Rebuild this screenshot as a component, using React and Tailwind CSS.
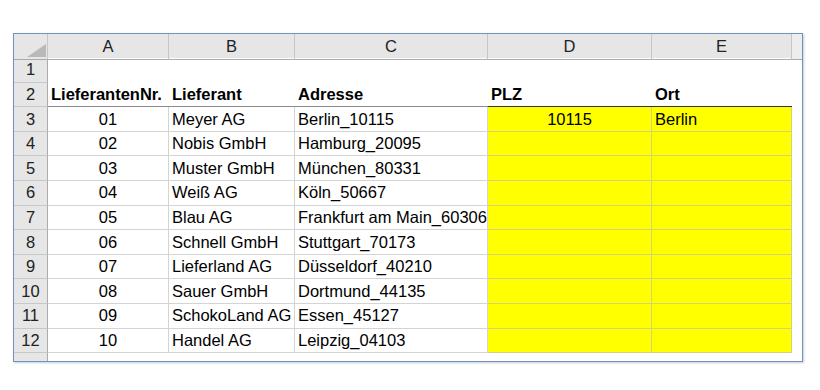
import React from "react";

const rows = [
  ["01", "Meyer AG", "Berlin_10115", "10115", "Berlin"],
  ["02", "Nobis GmbH", "Hamburg_20095", "", ""],
  ["03", "Muster GmbH", "München_80331", "", ""],
  ["04", "Weiß AG", "Köln_50667", "", ""],
  ["05", "Blau AG", "Frankfurt am Main_60306", "", ""],
  ["06", "Schnell GmbH", "Stuttgart_70173", "", ""],
  ["07", "Lieferland AG", "Düsseldorf_40210", "", ""],
  ["08", "Sauer GmbH", "Dortmund_44135", "", ""],
  ["09", "SchokoLand AG", "Essen_45127", "", ""],
  ["10", "Handel AG", "Leipzig_04103", "", ""],
];

const cols = "grid grid-cols-[34px_121px_126px_193px_164px_140px_10px]";

function RowNum({ n, h = "h-[24.6px]" }) {
  return (
    <div className={`${h} flex items-center justify-center font-normal bg-[#e6e6e6] border-r border-b border-r-[#ababab] border-b-[#c8c8c8] text-[#222]`}>
      {n}
    </div>
  );
}

function Cell({ children, className = "" }) {
  return (
    <div className={`h-[24.6px] flex items-center whitespace-nowrap overflow-visible border-r border-b border-[#d4d4d4] ${className}`}>
      {children}
    </div>
  );
}

function Plain({ children, className = "" }) {
  return (
    <div className={`h-[24.6px] flex items-center whitespace-nowrap ${className}`}>
      {children}
    </div>
  );
}

export default function App() {
  return (
    <div className="w-[820px] h-[390px] bg-white pt-[33px] pl-[13px] font-['Liberation_Sans',Arial,sans-serif] text-[16.5px] text-black">
      <div className="w-[790px] h-[329px] border border-[#6f93bb] shadow-[1px_1px_2px_rgba(80,110,150,0.35)] overflow-hidden bg-white">
        {/* column header */}
        <div className={`${cols} h-[24px] bg-[#e6e6e6] text-[#222]`}>
          <div className="relative border-r border-b border-r-[#c6c6c6] border-b-[#ababab]">
            <svg className="absolute left-[13px] top-[10px]" width="19" height="13" viewBox="0 0 19 13">
              <polygon points="19,0 19,13 0,13" fill="#b9b9b9" />
            </svg>
          </div>
          {["A", "B", "C", "D", "E"].map((c) => (
            <div key={c} className="flex items-center justify-center border-r border-b border-r-[#c6c6c6] border-b-[#ababab]">
              {c}
            </div>
          ))}
          <div className="bg-[#ededed] border-b border-[#ababab]" />
        </div>

        {/* row 1 */}
        <div className={cols}>
          <RowNum n="1" />
          <div className="col-span-6" />
        </div>

        {/* row 2 headers */}
        <div className={`${cols} font-bold`}>
          <RowNum n="2" />
          <Plain className="pl-[3px] border-b border-[#8a8a8a]">LieferantenNr.</Plain>
          <Plain className="pl-[3px] border-b border-[#8a8a8a]">Lieferant</Plain>
          <Plain className="pl-[3px] border-b border-[#8a8a8a]">Adresse</Plain>
          <Plain className="pl-[3px] border-b border-[#333]">PLZ</Plain>
          <Plain className="pl-[3px] border-b border-[#333]">Ort</Plain>
          <div />
        </div>

        {rows.map((r, i) => (
          <div key={r[0]} className={cols}>
            <RowNum n={String(i + 3)} />
            <Cell className="justify-center">{r[0]}</Cell>
            <Cell className="pl-[3px]">{r[1]}</Cell>
            <Cell className="pl-[3px] relative z-10">{r[2]}</Cell>
            <Cell className="justify-center bg-[#ffff00] !border-[#d2d27a]">{r[3]}</Cell>
            <Cell className="pl-[3px] bg-[#ffff00] !border-[#d2d27a]">{r[4]}</Cell>
            <div />
          </div>
        ))}

        {/* partial row 13 */}
        <div className={cols}>
          <RowNum n="" h="h-[12px]" />
        </div>
      </div>
    </div>
  );
}
